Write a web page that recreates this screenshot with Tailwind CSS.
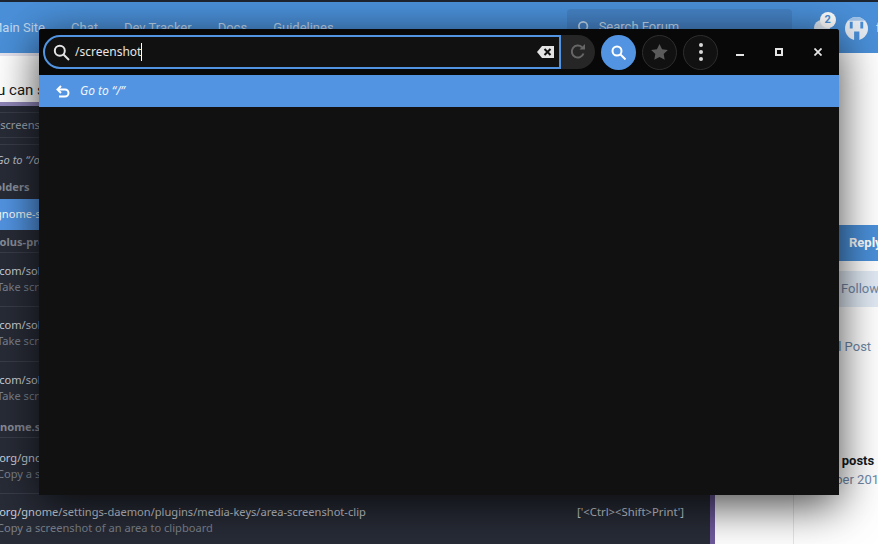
<!DOCTYPE html>
<html lang="en">
<head>
  <meta charset="UTF-8" />
  <title>Forum with launcher</title>
  <script src="https://cdn.jsdelivr.net/npm/@tailwindcss/browser@4"></script>
</head>
<body class="bg-white overflow-hidden">

<div class="relative w-[878px] h-[544px] overflow-hidden bg-white font-['Roboto',sans-serif]">

  <!-- forum header -->
  <header class="h-[53px] bg-[#4a90d9] border-t-2 border-[#1d2530] flex items-start text-[13px] text-[#c4dcf3] whitespace-nowrap">
    <nav class="flex gap-[26px] pt-[16px] -ml-[9px] shrink-0">
      <span>Main Site</span>
      <span>Chat</span>
      <span>Dev Tracker</span>
      <span>Docs</span>
      <span>Guidelines</span>
    </nav>
    <div class="ml-[233px] mt-[7px] w-[225px] h-[36px] shrink-0 rounded bg-[#4583c6] flex items-center pl-[11px] gap-[9px]">
      <svg class="w-[12px] h-[12px]" viewBox="0 0 14 14" fill="none" stroke="#c4dcf3" stroke-width="2"><circle cx="6" cy="6" r="5" /><path d="M10 10l4 4" /></svg>
      <span>Search Forum</span>
    </div>
    <div class="relative ml-[22px] mt-[18px] w-[16px] h-[16px] shrink-0 rounded-full bg-[#dfeaf6]">
      <span class="absolute -top-[8px] left-[6px] w-[16px] h-[16px] rounded-full bg-white text-[#4a90d9] text-[11px] font-bold flex items-center justify-center">2</span>
    </div>
    <div class="ml-[15px] mt-[15px] w-[23px] h-[23px] shrink-0 rounded-full overflow-hidden">
      <svg class="w-[23px] h-[23px]" viewBox="0 0 24 24"><rect width="24" height="24" fill="#e9eef5" /><path fill="#9fc3e9" d="M0 0h24v4H0z" /><path fill="#4a90d9" d="M5 5h3v7H5zM16 5h3v7h-3zM9.500 15H15v9H9.500z" /></svg>
    </div>
    <span class="ml-[8px] pt-[16px]">forum</span>
  </header>

  <!-- page body under the windows -->
  <div class="flex h-[491px]">
    <!-- dconf editor window -->
    <div class="w-[715px] shrink-0 flex flex-col">
      <div class="h-[3px] bg-[#e6e4ef]"></div>
      <div class="h-[46px] bg-white text-[15px] leading-[24px] text-[#16191d] pt-[22px] whitespace-nowrap">
        <div class="-ml-[20px]">You can see</div>
      </div>
      <div class="h-[4px] bg-[#8f86b8]"></div>
      <div class="flex-1 border-r-[5px] border-[#6f5b9e] bg-[#282c37] font-['Noto_Sans',sans-serif] text-[11.100px] text-[#cdd2da] overflow-hidden whitespace-nowrap">
        <div class="h-[7px] border-b border-[#3a3e49]"></div>
        <div class="h-[25px] border-b border-[#3a3e49] flex items-center text-[#9aa1ac]"><span class="-ml-[4px]">/screenshot</span></div>
        <div class="h-[7px] border-b border-[#3a3e49]"></div>
        <div class="h-[31px] flex items-center italic text-[#b8bdc6]"><span class="-ml-[4px]">Go to “/org”</span></div>
        <div class="h-[23px] flex items-center font-bold text-[#888e99]"><span class="-ml-[11px]">Folders</span></div>
        <div class="h-[31px] bg-[#5294e2] flex items-center text-white"><span class="-ml-[5px]">gnome-shell</span></div>
        <div class="h-[23px] border-b border-[#3a3e49] flex items-center pt-[2px] font-bold text-[#888e99]"><span class="-ml-[6px]">solus-project</span></div>
        <div class="h-[54px] border-b border-[#3a3e49] pt-[10px] leading-[16px]">
          <div class="-ml-[5px]">/com/solus</div>
          <div class="-ml-[3px] text-[#7c828d]">Take screenshot</div>
        </div>
        <div class="h-[55px] border-b border-[#3a3e49] pt-[10px] leading-[16px]">
          <div class="-ml-[5px]">/com/solus</div>
          <div class="-ml-[3px] text-[#7c828d]">Take screenshot</div>
        </div>
        <div class="h-[55px] pt-[10px] leading-[16px]">
          <div class="-ml-[5px]">/com/solus</div>
          <div class="-ml-[3px] text-[#7c828d]">Take screenshot</div>
        </div>
        <div class="h-[21px] border-b border-[#3a3e49] flex items-center font-bold text-[#888e99]"><span class="-ml-[7px]">gnome.shell</span></div>
        <div class="h-[56px] border-b border-[#3a3e49] pt-[12px] leading-[16px]">
          <div class="-ml-[5px]">/org/gnome</div>
          <div class="-ml-[3px] text-[#7c828d]">Copy a screenshot</div>
        </div>
        <div class="pt-[10px] leading-[16px] flex justify-between pr-[26px]">
          <div>
            <div class="-ml-[5px]">/org/gnome/settings-daemon/plugins/media-keys/area-screenshot-clip</div>
            <div class="-ml-[3px] text-[#7c828d]">Copy a screenshot of an area to clipboard</div>
          </div>
          <div class="text-[11.300px]">['&lt;Ctrl&gt;&lt;Shift&gt;Print']</div>
        </div>
      </div>
    </div>

    <!-- forum right column -->
    <div class="relative flex-1 min-w-0 flex flex-col pt-[172px] text-[13px] text-[#6f87a5] whitespace-nowrap">
      <div class="ml-[94px] h-[36px] bg-[#4a90d9] flex items-center pl-[40px] text-white font-bold -mr-[40px]">Reply to topic</div>
      <div class="ml-[94px] mt-[10px] h-[36px] bg-[#e1eaf5] flex items-center pl-[32px] -mr-[40px]">Follow</div>
      <div class="ml-[82px] mt-[30px]">Original Post</div>
      <div class="ml-[107px] mt-[95px] font-bold text-[#16191d] leading-[18px]">No posts</div>
      <div class="ml-[93px] leading-[19px]">October 2019</div>
      <div class="absolute left-[78px] top-[320px] bottom-0 w-px bg-[#dfe8f2]"></div>
    </div>
  </div>

  <!-- launcher window -->
  <div class="absolute left-[39px] top-[29px] w-[800px] h-[466px] bg-[#111111] shadow-[0_10px_45px_rgba(0,0,0,0.75)] rounded-t-[3px] flex flex-col overflow-hidden font-['Noto_Sans',sans-serif]">
    <div class="h-[46px] shrink-0 bg-[#080808] flex items-center pl-[4px]">
      <div class="w-[518px] h-[34px] bg-[#111111] border-2 border-[#5294e2] rounded-l-[17px] flex items-center pl-[8px] text-[12px] text-[#e6e6e6]">
        <svg class="w-[17px] h-[17px]" viewBox="0 0 17 17" fill="none" stroke="#e4e4e4" stroke-width="2"><circle cx="6.800" cy="6.800" r="5" /><path d="M10.500 10.500l5.500 5.500" /></svg>
        <span class="ml-[5px] border-r border-white leading-[18px]">/screenshot</span>
        <svg class="ml-auto mr-[5px] w-[17px] h-[12px]" viewBox="0 0 17 12"><path fill="#e4e4e4" d="M5 0h12v12H5L0 6z" /><path stroke="#111111" stroke-width="2" d="M7.500 3l6 6M13.500 3l-6 6" /></svg>
      </div>
      <div class="w-[34px] h-[34px] bg-[#262626] rounded-r-[17px] flex items-center justify-center">
        <svg class="w-[16px] h-[16px]" viewBox="0 0 16 16" fill="none" stroke="#666666" stroke-width="2"><path d="M13.500 9.500A6 6 0 1 1 12 3.200" /><path fill="#666666" stroke="none" d="M9.500 5.500H15V0z" /></svg>
      </div>
      <div class="ml-[6px] w-[35px] h-[35px] rounded-full bg-[#5294e2] flex items-center justify-center">
        <svg class="w-[15px] h-[15px]" viewBox="0 0 15 15" fill="none" stroke="#ffffff" stroke-width="2"><circle cx="6" cy="6" r="4.500" /><path d="M9.500 9.500l5 5" /></svg>
      </div>
      <div class="ml-[6px] w-[35px] h-[35px] rounded-full bg-[#111111] border border-[#2e2e2e] flex items-center justify-center">
        <svg class="w-[17px] h-[16px]" viewBox="0 0 24 23" fill="#5a5a5a"><path d="M12 0l3.700 7.600 8.300 1.100-6 5.800 1.500 8.300-7.500-4-7.500 4L6 14.500l-6-5.800 8.300-1.100z" /></svg>
      </div>
      <div class="ml-[6px] w-[35px] h-[35px] rounded-full bg-[#111111] border border-[#2e2e2e] flex flex-col items-center justify-center gap-[3px]">
        <span class="w-[4px] h-[4px] rounded-full bg-[#d8d8d8]"></span>
        <span class="w-[4px] h-[4px] rounded-full bg-[#d8d8d8]"></span>
        <span class="w-[4px] h-[4px] rounded-full bg-[#d8d8d8]"></span>
      </div>
      <div class="ml-[18px] mb-[2px] w-[8px] h-[9px] flex items-end"><span class="w-[8px] h-[2px] bg-[#e4e4e4]"></span></div>
      <div class="ml-[31px] mb-[1px] w-[8px] h-[8px] border-2 border-[#e4e4e4]"></div>
      <svg class="ml-[31px] mb-[1px] w-[8px] h-[8px]" viewBox="0 0 9 9" stroke="#e4e4e4" stroke-width="2"><path d="M0.500 0.500l8 8M8.500 0.500l-8 8" /></svg>
    </div>
    <div class="h-[32px] shrink-0 bg-[#5294e2] flex items-center pl-[17px] text-[12px] italic text-[#eef4fc]">
      <svg class="w-[14px] h-[13px]" viewBox="0 0 14 13" fill="none" stroke="#ffffff" stroke-width="2"><path d="M5 1L1.500 4.500 5 8" /><path d="M2 4.500h7a3.300 3.300 0 0 1 0 7H3" /></svg>
      <span class="ml-[10px]">Go to “/”</span>
    </div>
  </div>
</div>

</body>
</html>
